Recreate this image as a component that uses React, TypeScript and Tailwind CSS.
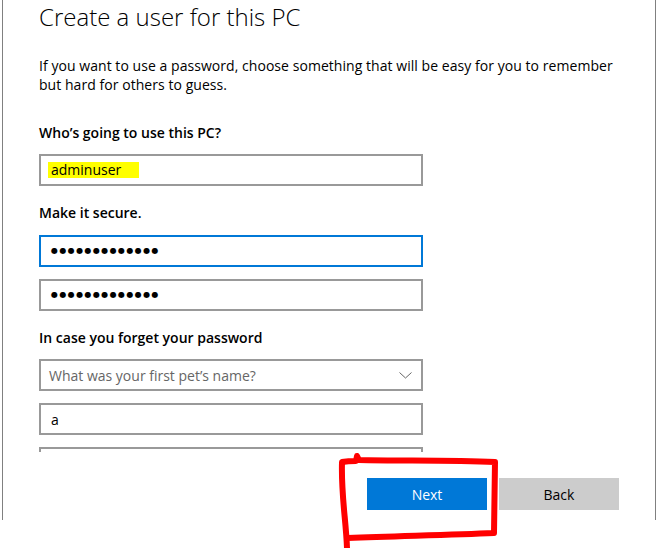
const font = { fontFamily: '"Open Sans", "Noto Sans", sans-serif' };

function TextBox({ children, focused }: { children?: React.ReactNode; focused?: boolean }) {
  return (
    <div
      className={`flex h-[32px] w-[384px] items-center border-2 bg-white px-[10px] text-[14px] text-black ${
        focused ? "border-[#0078d7]" : "border-[#999999]"
      }`}
    >
      {children}
    </div>
  );
}

function Dots() {
  return (
    <span
      className="text-[8px] tracking-[1.4px] text-black"
      style={{ fontFamily: '"DejaVu Sans", sans-serif' }}
    >
      ●●●●●●●●●●●●●
    </span>
  );
}

export default function App() {
  return (
    <div className="relative h-[548px] w-[657px] overflow-hidden bg-white" style={font}>
      <div className="ml-[2px] flex h-[520px] w-[654px] flex-col border-x border-[#808080]">
        {/* form, clipped at the bottom */}
        <div className="h-[452px] overflow-hidden pl-[36px]">
          <h1 className="mt-[1px] text-[24px] font-light leading-[32px] text-black">
            Create a user for this PC
          </h1>
          <p className="mt-[23px] text-[14px] leading-[19px] tracking-[0.05px] text-black">
            If you want to use a password, choose something that will be easy for you to remember
            <br />
            but hard for others to guess.
          </p>

          <div className="mt-[29px] text-[14px] font-semibold leading-[20px] text-black">
            Who’s going to use this PC?
          </div>
          <div className="mt-[11px]">
            <TextBox>
              <span className="-ml-[3px] flex h-[16px] items-center bg-[#ffff00] pl-[3px] pr-[18px] leading-[16px]">
                adminuser
              </span>
            </TextBox>
          </div>

          <div className="mt-[17px] text-[14px] font-semibold leading-[20px] text-black">
            Make it secure.
          </div>
          <div className="mt-[12px]">
            <TextBox focused>
              <Dots />
            </TextBox>
          </div>
          <div className="mt-[12px]">
            <TextBox>
              <Dots />
            </TextBox>
          </div>

          <div className="mt-[17px] text-[14px] font-semibold leading-[20px] text-black">
            In case you forget your password
          </div>
          <div className="mt-[11px]">
            <div className="flex h-[32px] w-[384px] items-center justify-between border-2 border-[#999999] bg-white pl-[8px] pr-[8px] text-[14px] text-[#666666]">
              <span>What was your first pet’s name?</span>
              <svg width="13" height="8" viewBox="0 0 13 8" className="mr-[1px]">
                <polyline points="0.5,1.5 6.5,7 12.5,1.5" fill="none" stroke="#666666" strokeWidth="1" />
              </svg>
            </div>
          </div>
          <div className="mt-[12px]">
            <TextBox>a</TextBox>
          </div>
          <div className="mt-[12px]">
            <TextBox />
          </div>
        </div>

        {/* footer buttons */}
        <div className="flex justify-end gap-[12px] pr-[36px] pt-[26px]">
          <button className="h-[32px] w-[120px] bg-[#0078d7] text-[14px] text-white">Next</button>
          <button className="h-[32px] w-[120px] bg-[#cccccc] text-[14px] text-black">Back</button>
        </div>
      </div>

      {/* red hand-drawn annotation */}
      <svg className="pointer-events-none absolute left-0 top-0" width="657" height="548" viewBox="0 0 657 548">
        <path
          d="M347 548 C346 520 341 495 342 462 C348 461 352 461 356 461 L357 456 L359 460 C400 461 450 460 495 462 L494 533 C450 535 400 536 348 538"
          fill="none"
          stroke="#ff0000"
          strokeWidth="6"
          strokeLinejoin="round"
          strokeLinecap="round"
        />
      </svg>
    </div>
  );
}
